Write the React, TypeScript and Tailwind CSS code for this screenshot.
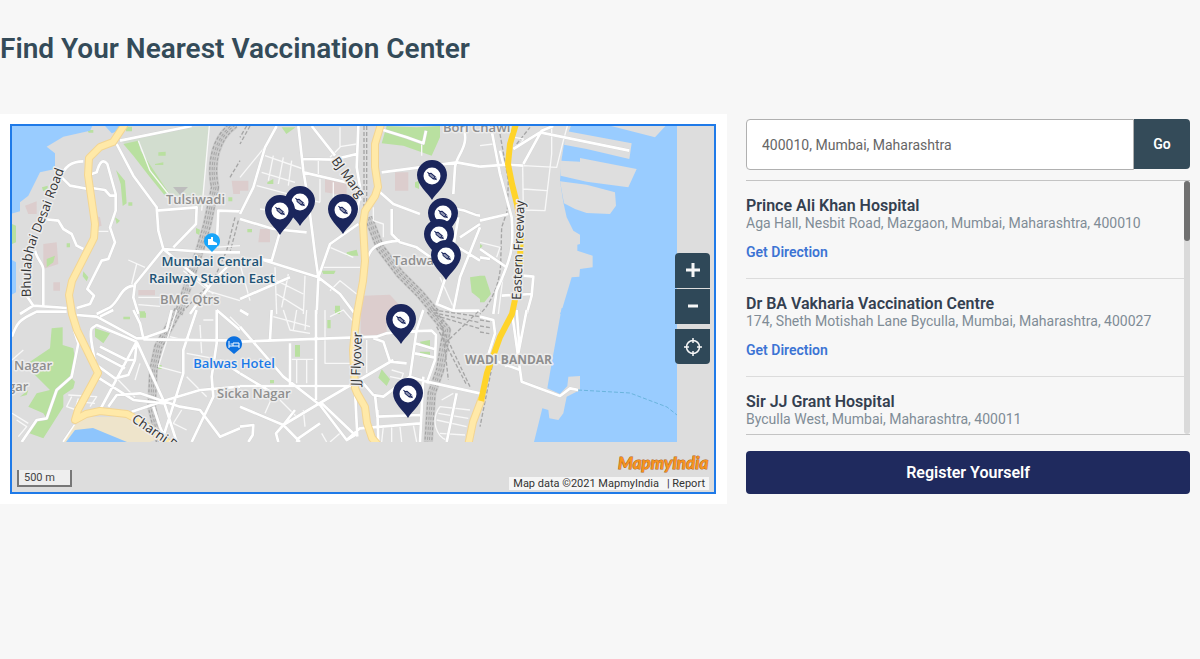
import { useState } from "react";

type Center = { name: string; address: string };

const centers: Center[] = [
  {
    name: "Prince Ali Khan Hospital",
    address: "Aga Hall, Nesbit Road, Mazgaon, Mumbai, Maharashtra, 400010",
  },
  {
    name: "Dr BA Vakharia Vaccination Centre",
    address: "174, Sheth Motishah Lane Byculla, Mumbai, Maharashtra, 400027",
  },
  {
    name: "Sir JJ Grant Hospital",
    address: "Byculla West, Mumbai, Maharashtra, 400011",
  },
];

// tip of every pin, back to front
const pins = [
  [300, 226],
  [280, 235],
  [343, 234],
  [432, 200],
  [443, 238],
  [439, 259],
  [446, 280],
  [401, 344],
  [408, 418],
];

type TileData = {
  x: number;
  y: number;
  water?: string;
  land?: string;
  paleParks?: string;
  parks?: string;
  zones?: string;
  lanes: string;
  roads: string;
  wideRail?: string;
  rail?: string;
};

// Tile paths are stored at three units per map pixel.
const tiles: TileData[] = [
  {
    x: 0,
    y: 114,
    water:
      "M30 30H280L270 50L190 68L140 98L165 118L165 165L120 175L85 245L60 265V292L30 300ZM310 30H365L352 52L335 58ZM30 435L48 445V535L30 545Z",
    paleParks: "M360 82L575 40L628 36L605 280L500 240L420 110Z",
    parks:
      "M370 90L415 80L422 110L455 160L505 235L495 245L450 190L400 125ZM348 168L375 200L380 268L368 276L362 210ZM475 115l22-2v12h-22zM465 150l25-5v8h-25zM36 330l12 5v50l-12 5zM140 435l25-10-5 20-20 15zM250 472l15 18-5 12-12-15zM345 310l15 10-10 10zM126 220l17-5v12l-14 4zM588 342l12 5-2 16-10-5zM262 48h18v8h-14zM378 38h18v14h-18zM385 265h12v10h-12zM685 250h12v12h-12zM200 388h10v12h-10zM415 592h20v8h-20z",
    zones:
      "M130 390L170 385L175 450L130 465ZM75 275L110 262V300L85 300ZM285 305l15 5 5 25-15 5zM695 200h25v40h-20zM160 505h20v25h-20zM415 528h50v16h-50z",
    lanes:
      "M415 80L450 170L505 240M628 36L605 290M295 352h30M385 438L435 460M410 450L395 510M415 572L480 577M415 550L490 550M640 400L720 395M550 470L640 540M620 530L720 560",
    roads:
      "M360 80L575 36M350 90L400 185L470 280L475 350L490 405L635 415H720M250 142C210 142 195 160 180 190M265 225L210 215L185 190M275 180L290 175C300 140 310 135 322 150L347 240V290L330 340L345 385L325 435L305 440L262 525L282 545L270 570L230 582M275 222L315 228L330 245L347 245M130 315L175 320L190 345L215 360L230 395L250 405M105 410C112 440 132 450 130 470V575M80 545L100 575L200 582M60 600L100 575M490 405L405 510L400 550L415 600M400 515C360 520 360 560 330 580L290 600M470 290L590 280L588 330L520 400M650 400L655 290L720 292M490 405L625 520M570 600L640 500L700 440",
    wideRail:
      "M705 30C645 70 630 150 645 220L622 330L602 400L575 480L535 600",
    rail: "M690 190L720 140M705 310L680 410L640 500L550 590M715 320L690 415",
  },
  {
    x: 240,
    y: 114,
    parks:
      "M440 36L530 40L600 36V70L575 125L490 95L425 88ZM525 205l12-5v25l-12-5zM690 490l30-5v70l-25-20zM320 415l30-8 5 18h-35zM245 470h42l-5 10h-32zM82 205l18-10v15h-18zM125 40h42l-28 20zM285 575h15v25h-15zM22 345h14v10h-14z",
    zones:
      "M465 175h40v55h-40zM370 545L450 542L475 570L500 600H360ZM0 200h25v30h-25zM60 345h30v40h-35zM255 195L320 205V245L255 235Z",
    lanes:
      "M75 125L190 165M65 175L165 205M50 215L240 265M100 125L85 200M130 130L115 210M155 140L145 215M300 40V100L270 130M0 190L90 80M235 140V180M240 195V265M280 205V270M60 285L205 305M240 460H360M270 530L300 500L350 540M105 460L110 600M145 480L125 580M195 485L190 600M110 500L190 540M110 540L190 590M400 280V320L430 330V370M545 90V125M300 98L350 90M270 400L340 430M0 450L30 560M600 490L640 580",
    roads:
      "M110 36L75 100L40 220L0 300M175 36L190 170L205 260L225 420L235 490L300 540L345 600M215 36L285 125M187 135L280 137L350 120M190 175L340 210M355 36L350 160L362 230L350 300M0 315L100 345L200 355M118 360L95 440L60 435L235 490L270 390L355 330M235 490L230 600M0 555L150 490M425 175L650 145L720 158M415 230L460 270L540 300M455 285V360L480 385L530 400L600 450M380 440C390 400 410 385 480 380M670 36C690 100 650 120 645 160L640 240M650 285C690 290 700 305 720 305M655 310L640 400M615 495L590 570L640 590L720 590M640 590L660 490L720 340M655 400L720 440M660 370L720 330M420 45L500 70L550 88L558 50M345 200L362 260",
    wideRail: "M385 310L420 400L480 480L540 540L590 600",
    rail: "M372 36V290M380 36V300M30 36L0 90M20 36L0 70",
  },
  {
    x: 480,
    y: 114,
    water:
      "M275 30H592V600H240L248 580L275 490L298 488L300 465L338 460V425L292 410V392L300 390V362L280 350L260 310L250 265L240 200L245 135L252 90Z",
    land: "M370 30L525 70L562 30ZM262 52L455 88L448 135L320 105L252 92ZM242 140L300 143V132L470 165L445 220L320 203L242 185ZM240 202L320 212L405 235L408 275L390 300L320 297L285 285L252 268Z",
    parks: "M0 485h15l18 55-20 25H0zM0 390l8 5-8 10z",
    lanes:
      "M130 155L230 160L250 80L262 36M215 36V120L195 290L130 288L128 155M130 225L200 230M0 95L40 90M50 430L60 400L0 385M70 480L55 600M105 70L130 75L120 95",
    roads:
      "M35 50L60 180L95 310C102 400 95 430 50 530L40 600M100 105L180 55L448 110M130 150L185 50L220 36M0 158L80 152L130 155M0 320L85 300M0 405L80 460M0 430L30 435M130 485L160 488L155 545L140 600M65 545L155 540M70 150L60 110",
    rail: "M60 60L85 200L82 290L65 340L62 450C60 500 40 560 0 600M110 90L150 40",
  },
  {
    x: 0,
    y: 310,
    parks:
      "M90 155L150 115L155 55L188 52V105L220 115L225 150L210 200L225 215L220 235L190 255V290L130 385L88 370L110 330L140 325L130 310L85 290L110 250L150 240L90 180ZM285 55l45 15-20 30-25-20zM370 20h20v8h-20zM420 8h18v15h-18zM470 165h15v12h-15zM60 260l25-20-5 15z",
    lanes:
      "M36 150L70 120M205 255L290 260L270 290M215 260L200 290L230 300M36 310L85 340M235 265L225 300M530 0L475 170L550 190M510 80L550 90M560 200L620 260M610 30h30M600 45L605 130M55 380L80 350L50 330M545 300L520 340L560 360M230 275L285 280M350 205L405 262M405 210L420 160M560 130L640 145M690 20L720 50",
    roads:
      "M36 80C50 40 60 30 90 15L110 5L200 5M222 60L235 100L215 200L170 240L140 325L110 330L65 396M230 15L290 20L410 85L430 85L500 60L515 0M300 20L340 0M275 55C265 80 285 130 290 200L400 270L490 280M275 55L290 45L410 95M300 110L380 150L405 150L410 95M290 130L375 175M290 165L345 205L385 195L405 150M410 95L300 300M410 95L490 270L530 396M430 85L420 40L400 0M395 305L500 270L600 240L720 230M325 290L350 255L420 250L540 290L600 300L660 380L720 355M590 0L550 120V190L490 380M650 0V100L635 200L640 260L575 396M430 88L720 92M190 396L225 345M460 290L480 350L500 396M660 150L720 190M650 0L720 60",
    wideRail: "M535 0L475 110L460 180L455 290L480 396",
  },
  {
    x: 240,
    y: 310,
    parks:
      "M540 95l30-5v20h-25zM540 125h30v20l-30-5zM425 178l25 30-10 20-25-25zM165 105h15v35h-15zM262 30h10v25h-10zM90 210h12v10h-12zM280 0h25l-5 8z",
    zones: "M362 0H440V75L362 85Z",
    lanes:
      "M255 0V160H340M170 150V220M200 150V220M150 148h70M130 0L150 60L210 70M100 20L210 50M170 0L160 60M200 0L195 60M95 265L75 310M120 270L170 320M190 300L195 350M270 20L310 0L345 40M270 396L300 370M245 370L260 396M455 180L490 190L480 220M450 200L500 210M430 350L425 396M455 350V396M480 350L485 396M520 345L530 396M600 290L690 300M595 310L685 325M590 330L680 350M600 290C570 330 590 380 620 390M600 370L675 375M605 270L640 250M380 90V190",
    roads:
      "M0 50L130 200L240 285L320 390L345 375L245 280M0 95L410 80L440 70L480 65L575 62L588 75L585 150L560 220M228 0V270M0 228H340M95 0L90 90M130 345L230 285L460 150M0 290L130 345L180 396M130 345L165 300M150 100V228M0 190L100 250M320 390L360 355L540 340M370 220L400 255L430 260L510 200L530 60L550 0M400 85L430 95L450 155L500 160M405 255L412 320L540 315M550 200L540 396M560 215L720 250M650 250L620 396M345 240L352 380M412 300L415 396M130 345L108 370L115 396M0 350L40 345L38 375L25 396M170 396L175 385L240 340M525 100L585 118M525 130L585 143M510 200L560 215M0 0L25 15",
    wideRail: "M570 0L620 60L600 180L575 250L565 396",
    rail: "M580 0L720 20M580 8L720 38M585 16L720 56M600 40L690 230M590 50L680 225M615 100L720 0M605 30L625 210",
  },
  {
    x: 480,
    y: 310,
    water:
      "M245 -6H592V396H162L187 295L205 300L208 325L235 330L250 310L260 260L300 240V198L265 200L262 228L240 252L202 235L215 160Z",
    lanes: "",
    roads:
      "M0 20L40 30L45 70L20 150M95 0L120 180L125 215L240 258L270 235L295 240M140 0L115 130L75 170M40 150L120 180M110 0L118 110",
    rail: "M40 150L0 350M0 30l30 5M0 48l30 5M0 66l28 5",
  },
];

function Tile({ tile }: { tile: TileData }) {
  return (
    <g
      transform={`translate(${tile.x} ${tile.y}) scale(0.33333)`}
      fill="none"
      strokeLinejoin="round"
    >
      <path d={tile.paleParks || ""} fill="#d2ddcf" />
      <path d={tile.zones || ""} fill="#dccdcd" />
      <path d={tile.parks || ""} fill="#b9e0a0" />
      <path d={tile.water || ""} fill="#99ccff" />
      <path d={tile.land || ""} fill="#dedede" />
      <path d={tile.wideRail || ""} stroke="#cbcbcb" strokeWidth="28" />
      <path
        d={tile.wideRail || ""}
        stroke="#a3a3a3"
        strokeWidth="24"
        strokeDasharray="9 6"
      />
      <path d={tile.wideRail || ""} stroke="#cbcbcb" strokeWidth="17" />
      <path
        d={tile.wideRail || ""}
        stroke="#a8a8a8"
        strokeWidth="9"
        strokeDasharray="9 6"
      />
      <path d={tile.wideRail || ""} stroke="#cbcbcb" strokeWidth="3" />
      <path
        d={tile.rail || ""}
        stroke="#a6a6a6"
        strokeWidth="4"
        strokeDasharray="12 6"
      />
      <path d={tile.lanes} stroke="#f8f8f8" strokeWidth="4" />
      <path d={tile.roads} stroke="#d2d2d2" strokeWidth="10" />
      <path d={tile.roads} stroke="#fff" strokeWidth="8" />
    </g>
  );
}

function Pin({ x, y }: { x: number; y: number }) {
  return (
    <g transform={`translate(${x} ${y})`}>
      <path
        d="M0 0C-4 -7 -15 -15 -15 -25A15 15 0 1 1 15 -25C15 -15 4 -7 0 0Z"
        fill="#1b265c"
      />
      <circle cy="-24" r="8.5" fill="#fff" />
      <g transform="translate(0 -24) rotate(40)" stroke="#1b265c">
        <path d="M-6 0H6M4.500 -1.500V1.500" fill="none" />
        <path
          d="M-4 0L-2.500 -1.500H3V1.500H-2.500Z"
          fill="#8f94b0"
          strokeWidth="1"
        />
      </g>
    </g>
  );
}

const highways =
  "M125 124L113 142L100 147L89 158L88 175L95 224L94 238L72 281L69 295L72 314L77 330L98 373L78 410L75 420L86 414L100 411L127 414L140 421L172 446M381 124L375 144V167L378 187L375 196L365 211L363 224L365 261L363 281L357 314L355 330L353 350L355 388L357 393L365 407L367 423L372 438L379 446M482 398L473 422L468 446";

function CityMap() {
  return (
    <svg
      className="block h-full w-full"
      viewBox="12 126 702 366"
      preserveAspectRatio="xMidYMid slice"
      role="img"
      aria-label="Map of vaccination centers in Mumbai"
      fontFamily="'Open Sans', 'Noto Sans', sans-serif"
    >
      <defs>
        <clipPath id="loaded">
          <path d="M12 126H677V442H12Z" />
        </clipPath>
        <path id="desai-road" d="M31 297C30 270 31 255 37 240L47 216L66 165" />
      </defs>
      <rect x="12" y="126" width="702" height="366" fill="#dddddd" />
      <g clipPath="url(#loaded)">
        {tiles.map((tile) => (
          <Tile key={`${tile.x}-${tile.y}`} tile={tile} />
        ))}
        <path d="M75 425L84 417L127 417L160 438L150 442H64Z" fill="#eee4cb" />
        <path d="M66 442L75 430L93 428L127 442Z" fill="#8ec5fc" />
        <g fill="none" strokeLinejoin="round">
          <path d={highways} stroke="#f3d592" strokeWidth="8" />
          <path d={highways} stroke="#ffe9a8" strokeWidth="6" />
          <path
            d="M516 124L510 144L508 164L512 184L517 204L521 230L520 260L517 290L512 314L500 337L487 373L481 401"
            stroke="#ffd42a"
            strokeWidth="6"
          />
          <path
            d="M578 390L630 393L667 407L677 415"
            stroke="#6ab4dd"
            strokeDasharray="4 2"
          />
        </g>

        <g
          stroke="#ececec"
          strokeWidth="3"
          strokeLinejoin="round"
          paintOrder="stroke"
          fontSize="13"
          fontWeight="600"
          fill="#8f8f8f"
        >
          <path d="M173 187h15l-8 8z" fill="#bdbdbd" stroke="none" />
          <text x="166" y="204">Tulsiwadi</text>
          <text x="160" y="304">BMC Qtrs</text>
          <text x="217" y="398">Sicka Nagar</text>
          <text x="14" y="370">Nagar</text>
          <text x="8" y="391">gar</text>
          <text x="393" y="265">Tadwadi</text>
          <text x="443" y="132">Bori Chawl</text>
          <text x="465" y="364" fontSize="12" fontWeight="700">
            WADI BANDAR
          </text>
          <g fill="#205375" textAnchor="middle">
            <text x="212" y="266">Mumbai Central</text>
            <text x="212" y="283">Railway Station East</text>
          </g>
          <text x="234" y="368" fill="#1a7ae8" textAnchor="middle">
            Balwas Hotel
          </text>
          <g fill="#333" fontWeight="400">
            <text>
              <textPath href="#desai-road">Bhulabhai Desai Road</textPath>
            </text>
            <text transform="translate(331 161) rotate(54)">BJ Marg</text>
            <text transform="translate(360 386) rotate(-88)">JJ Flyover</text>
            <text transform="translate(521 300) rotate(-88)">
              Eastern Freeway
            </text>
            <text transform="translate(131 421) rotate(34)">Charni Road</text>
          </g>
        </g>

        <g>
          <path d="M212 252L205 245A8 8 0 1 1 219 245Z" fill="#18a5fa" />
          <path d="M208 239h3v-2h2v4l4 2v2h-9z" fill="#fff" />
          <path d="M234 354L227 348A8 8 0 1 1 241 348Z" fill="#0b70e0" />
          <path
            d="M229 341v7M229 346h10v2M239 346v-3h-6v3M230.500 344h2"
            fill="none"
            stroke="#fff"
          />
        </g>
        {pins.map(([x, y]) => (
          <Pin key={`${x}-${y}`} x={x} y={y} />
        ))}
      </g>
    </svg>
  );
}

export default function App() {
  const [query, setQuery] = useState("400010, Mumbai, Maharashtra");

  return (
    <main className="min-h-screen bg-[#f7f7f7] font-['Roboto',sans-serif]">
      <h1 className="pt-[33px] text-[28px] leading-8 font-semibold text-[#344b59]">
        Find Your Nearest Vaccination Center
      </h1>

      <div className="mt-[49px] grid grid-cols-[727fr_444fr] gap-[19px] pr-2.5">
        <section className="bg-white py-2.5 pr-[11px] pl-2.5">
          <div className="relative h-[370px] overflow-hidden border-2 border-[#1f7ae8]">
            <CityMap />

            <div className="absolute top-[127px] right-1 flex w-[35px] flex-col text-[#f7f7f7]">
              <button
                aria-label="Zoom in"
                className="flex h-[35px] items-center justify-center rounded-t bg-[#2f4858]"
              >
                <svg className="h-4 w-4" viewBox="0 0 16 16">
                  <path d="M1 7H15M8 0V14" stroke="currentColor" strokeWidth="3" />
                </svg>
              </button>
              <button
                aria-label="Zoom out"
                className="mt-px flex h-[35px] items-center justify-center bg-[#2f4858]"
              >
                <svg className="h-4 w-4" viewBox="0 0 16 16">
                  <path d="M3 7H13" stroke="currentColor" strokeWidth="3" />
                </svg>
              </button>
              <button
                aria-label="My location"
                className="mt-[5px] flex h-[35px] items-center justify-center rounded-b bg-[#2f4858]"
              >
                <svg
                  className="h-[18px] w-[18px]"
                  viewBox="0 0 18 18"
                  fill="none"
                  stroke="currentColor"
                  strokeWidth="1.500"
                >
                  <circle cx="9" cy="9" r="6.500" />
                  <path d="M9 0V5M9 13V18M0 9H5M13 9H18" />
                </svg>
              </button>
            </div>

            <div className="absolute bottom-[5px] left-[5px] h-[17px] w-[55px] border-x-2 border-b-2 border-[#777] bg-[#eee] pl-[5px] text-[11px] leading-[15px] text-[#444]">
              500 m
            </div>

            <div className="absolute right-[5px] bottom-[2px] flex flex-col items-end">
              <svg
                className="h-6 w-[92px]"
                viewBox="0 0 92 24"
                role="img"
                aria-label="MapmyIndia"
              >
                <text
                  x="1"
                  y="16"
                  fill="#f7941d"
                  stroke="#b5651a"
                  strokeWidth="1"
                  paintOrder="stroke"
                  fontFamily="Lato, sans-serif"
                  fontSize="17"
                  fontWeight="700"
                  fontStyle="italic"
                >
                  MapmyIndia
                </text>
              </svg>
              <p className="flex gap-2 bg-[#f5f5f5] px-1 text-[11px] leading-[13px] text-[#333]">
                <span>Map data ©2021 MapmyIndia</span>
                <a href="#report">| Report</a>
              </p>
            </div>
          </div>
        </section>

        <section className="pt-[5px]">
          <form className="flex" onSubmit={(e) => e.preventDefault()}>
            <input
              aria-label="Pincode or locality"
              className="h-[51px] min-w-0 flex-1 rounded-l border border-[#b0b0b0] bg-white px-[15px] text-sm text-[#666] outline-none"
              value={query}
              onChange={(e) => setQuery(e.target.value)}
            />
            <button className="h-[50px] w-14 rounded-r bg-[#344b59] text-sm font-semibold text-white">
              Go
            </button>
          </form>

          <div className="mt-2.5 flex h-[255px] border-y border-[#c4c4c4]">
            <ul className="flex-1 overflow-hidden">
              {centers.map((center) => (
                <li
                  key={center.name}
                  className="border-b border-[#dcdcdc] pt-4 pb-[17px]"
                >
                  <h2 className="text-base leading-[17px] font-semibold text-[#344050]">
                    {center.name}
                  </h2>
                  <p className="text-sm leading-[18px] text-[#7f8c96]">
                    {center.address}
                  </p>
                  <a
                    href="#direction"
                    className="mt-[11px] block text-sm leading-[18px] font-semibold text-[#3c74d4]"
                  >
                    Get Direction
                  </a>
                </li>
              ))}
            </ul>
            <div className="w-1.5 rounded bg-[#dadada]">
              <div className="h-[60px] rounded bg-[#707070]" />
            </div>
          </div>

          <button className="mt-4 h-[43px] w-full rounded bg-[#1f2a5e] text-base font-semibold text-white">
            Register Yourself
          </button>
        </section>
      </div>
    </main>
  );
}
